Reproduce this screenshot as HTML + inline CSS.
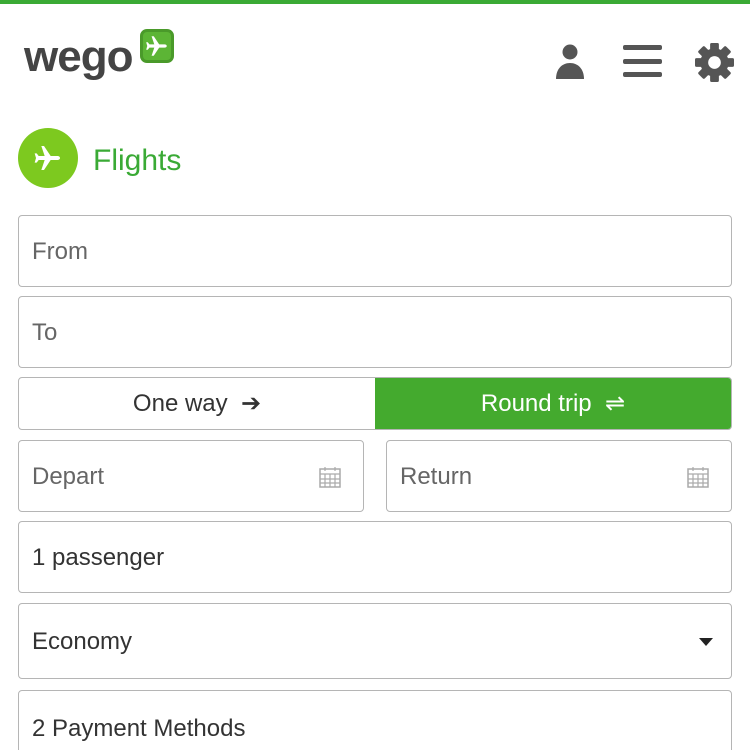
<!DOCTYPE html>
<html><head><meta charset="utf-8"><style>
*{box-sizing:border-box;margin:0;padding:0}
html,body{width:750px;height:750px;overflow:hidden}
body{background:#fff;font-family:"Liberation Sans",sans-serif;position:relative}
.bar{position:absolute;top:0;left:0;width:750px;height:4px;background:#3aaa35}
.f{position:absolute;border:1px solid #b5b5b5;border-radius:4px;font-size:24px;color:#666;padding-left:13px;padding-top:2px;display:flex;align-items:center}
.v{color:#333}
.cal{position:absolute;right:22px;top:25px}
</style></head><body>
<div class="bar"></div>
<div style="position:absolute;left:24px;top:32px;font:bold 44px 'Liberation Sans',sans-serif;color:#444;letter-spacing:-1px;line-height:50px">wego</div>
<div style="position:absolute;left:140px;top:29px;width:34px;height:34px;border-radius:7px;background:#5cb535;border:3px solid #4a9a2a"></div>
<svg style="position:absolute;left:144px;top:33px" width="26" height="26" viewBox="0 0 24 24"><path fill="#fff" d="M21 12c0-1-1-1.5-2-1.5h-5L9 3H7l2.5 7.5H5L3.5 8.5H2l1 3.5-1 3.5h1.5L5 13.5h4.5L7 21h2l5-7.5h5c1 0 2-.5 2-1.5z"/></svg>
<svg style="position:absolute;left:555px;top:43px" width="30" height="36" viewBox="0 0 30 36"><circle cx="15" cy="9" r="7.5" fill="#555"/><path d="M1 36c0-10 6-16 14-16s14 6 14 16z" fill="#555"/></svg>
<div style="position:absolute;left:623px;top:45px;width:39px;height:5px;background:#555;border-radius:2px"></div>
<div style="position:absolute;left:623px;top:59px;width:39px;height:5px;background:#555;border-radius:2px"></div>
<div style="position:absolute;left:623px;top:72px;width:39px;height:5px;background:#555;border-radius:2px"></div>
<svg style="position:absolute;left:695px;top:43px" width="39" height="39" viewBox="0 0 40 40">
<g fill="#555" transform="translate(20 20)">
<rect x="-4.5" y="-20" width="9" height="40" rx="1.5"/>
<rect x="-4.5" y="-20" width="9" height="40" rx="1.5" transform="rotate(45)"/>
<rect x="-4.5" y="-20" width="9" height="40" rx="1.5" transform="rotate(90)"/>
<rect x="-4.5" y="-20" width="9" height="40" rx="1.5" transform="rotate(135)"/>
<circle r="14.5"/></g>
<circle cx="20" cy="20" r="6.5" fill="#fff"/></svg>
<div style="position:absolute;left:18px;top:128px;width:60px;height:60px;border-radius:50%;background:#7dc91f"></div>
<svg style="position:absolute;left:32px;top:142px" width="32" height="32" viewBox="0 0 24 24"><path fill="#fff" d="M21 12c0-1-1-1.5-2-1.5h-5L9 3H7l2.5 7.5H5L3.5 8.5H2l1 3.5-1 3.5h1.5L5 13.5h4.5L7 21h2l5-7.5h5c1 0 2-.5 2-1.5z"/></svg>
<div style="position:absolute;left:93px;top:144px;font-size:30px;color:#3aaa35">Flights</div>
<div class="f" style="left:18px;top:215px;width:714px;height:72px">From</div>
<div class="f" style="left:18px;top:296px;width:714px;height:72px">To</div>
<div class="f v" style="left:18px;top:377px;width:714px;height:53px;padding:0;overflow:hidden">
<div style="width:356px;text-align:center">One way &nbsp;➔</div>
<div style="position:absolute;left:356px;top:0;right:0;bottom:0;background:#44aa2e;color:#fff;display:flex;align-items:center;justify-content:center">Round trip &nbsp;⇌</div></div>
<div class="f" style="left:18px;top:440px;width:346px;height:72px">Depart<svg class="cal" width="22" height="22" viewBox="0 0 22 22"><rect x="1" y="3" width="20" height="18" fill="none" stroke="#aaa" stroke-width="1.5"/><path d="M1 8h20M1 13h20M1 17h20M6 8v13M11 8v13M16 8v13M6 1v4M16 1v4" stroke="#aaa" stroke-width="1.2"/></svg></div>
<div class="f" style="left:386px;top:440px;width:346px;height:72px">Return<svg class="cal" width="22" height="22" viewBox="0 0 22 22"><rect x="1" y="3" width="20" height="18" fill="none" stroke="#aaa" stroke-width="1.5"/><path d="M1 8h20M1 13h20M1 17h20M6 8v13M11 8v13M16 8v13M6 1v4M16 1v4" stroke="#aaa" stroke-width="1.2"/></svg></div>
<div class="f v" style="left:18px;top:521px;width:714px;height:72px">1 passenger</div>
<div class="f v" style="left:18px;top:603px;width:714px;height:76px">Economy<svg style="position:absolute;right:18px;top:34px" width="14" height="8"><path d="M0 0h14L7 8z" fill="#222"/></svg></div>
<div class="f v" style="left:18px;top:690px;width:714px;height:76px">2 Payment Methods</div>
</body></html>
